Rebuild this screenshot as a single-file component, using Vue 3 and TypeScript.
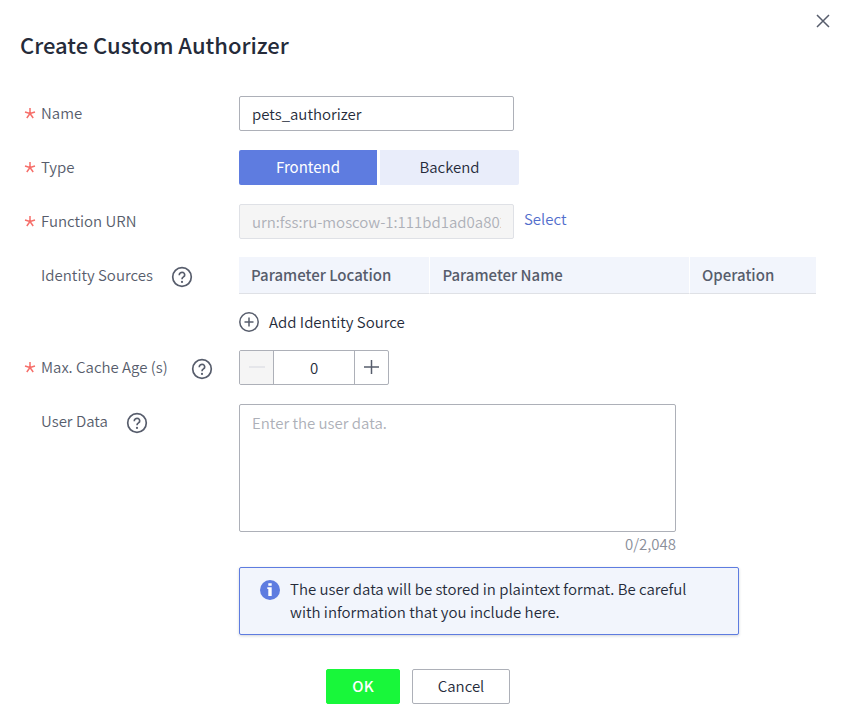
<script setup lang="ts">
import { computed, ref } from 'vue'

type AuthorizerType = 'Frontend' | 'Backend'

const types: AuthorizerType[] = ['Frontend', 'Backend']
const columns: string[] = ['Parameter Location', 'Parameter Name', 'Operation']
const maxLength = 2048

const name = ref('pets_authorizer')
const selectedType = ref<AuthorizerType>('Frontend')
const functionUrn = ref('urn:fss:ru-moscow-1:111bd1ad0a80259')
const cacheAge = ref(0)
const userData = ref('')

const counter = computed(() => `${userData.value.length}/${maxLength.toLocaleString('en-US')}`)

function step(delta: number): void {
  cacheAge.value = Math.max(0, Number(cacheAge.value) + delta)
}
</script>

<template>
  <main class="dialog" role="dialog" aria-labelledby="dialog-title">
    <header class="header">
      <h1 id="dialog-title" class="title">Create Custom Authorizer</h1>
      <button class="close" type="button" aria-label="Close">
        <svg width="14" height="14" viewBox="0 0 14 14"><path d="M1 1l12 12M13 1L1 13" /></svg>
      </button>
    </header>

    <form class="form" @submit.prevent>
      <div class="row">
        <div class="label required">
          <svg class="star" width="12" height="12" viewBox="0 0 12 12"><path d="M6 6.500V1M6 6.500L1 5M6 6.500l5-1.500M6 6.500l-3.200 4.500M6 6.500l3.200 4.500" /></svg>
          <label for="name">Name</label>
        </div>
        <input id="name" v-model="name" class="input" type="text" />
      </div>

      <div class="row">
        <div class="label required">
          <svg class="star" width="12" height="12" viewBox="0 0 12 12"><path d="M6 6.500V1M6 6.500L1 5M6 6.500l5-1.500M6 6.500l-3.200 4.500M6 6.500l3.200 4.500" /></svg>
          <span id="type-label">Type</span>
        </div>
        <div class="segments" role="group" aria-labelledby="type-label">
          <button
            v-for="type in types"
            :key="type"
            type="button"
            class="segment"
            :class="{ active: type === selectedType }"
            :aria-pressed="type === selectedType"
            @click="selectedType = type"
          >{{ type }}</button>
        </div>
      </div>

      <div class="row compact">
        <div class="label required">
          <svg class="star" width="12" height="12" viewBox="0 0 12 12"><path d="M6 6.500V1M6 6.500L1 5M6 6.500l5-1.500M6 6.500l-3.200 4.500M6 6.500l3.200 4.500" /></svg>
          <label for="urn">Function URN</label>
        </div>
        <div class="inline">
          <input id="urn" v-model="functionUrn" class="input" type="text" disabled />
          <a class="link" href="#">Select</a>
        </div>
      </div>

      <div class="row">
        <div class="label table-label">
          <span id="sources-label">Identity Sources</span>
          <svg class="help" width="22" height="22" viewBox="0 0 22 22"><circle cx="11" cy="11" r="9.300" /><path d="M8.300 9.300V8.900A2.700 2.500 0 1 1 12.500 10.900Q11 11.800 11 13.200" /><circle class="dot" cx="11" cy="15.900" r="1.100" /></svg>
        </div>
        <div class="sources">
          <table class="table" aria-labelledby="sources-label">
            <thead>
              <tr><th v-for="column in columns" :key="column" scope="col">{{ column }}</th></tr>
            </thead>
          </table>
          <button class="add" type="button">
            <svg width="20" height="20" viewBox="0 0 20 20"><circle cx="10" cy="10" r="9.200" /><path d="M10 5.500v9M5.500 10h9" /></svg>
            Add Identity Source
          </button>
        </div>
      </div>

      <div class="row">
        <div class="label required">
          <svg class="star" width="12" height="12" viewBox="0 0 12 12"><path d="M6 6.500V1M6 6.500L1 5M6 6.500l5-1.500M6 6.500l-3.200 4.500M6 6.500l3.200 4.500" /></svg>
          <label for="age">Max. Cache Age (s)</label>
          <svg class="help" width="22" height="22" viewBox="0 0 22 22"><circle cx="11" cy="11" r="9.300" /><path d="M8.300 9.300V8.900A2.700 2.500 0 1 1 12.500 10.900Q11 11.800 11 13.200" /><circle class="dot" cx="11" cy="15.900" r="1.100" /></svg>
        </div>
        <div class="stepper">
          <button type="button" aria-label="Decrease" :disabled="cacheAge <= 0" @click="step(-1)">
            <svg width="16" height="16" viewBox="0 0 16 16"><path d="M0 7h16" /></svg>
          </button>
          <input id="age" v-model="cacheAge" type="text" inputmode="numeric" />
          <button type="button" aria-label="Increase" @click="step(1)">
            <svg width="16" height="16" viewBox="0 0 16 16"><path d="M0 7h15M7.500 0v14" /></svg>
          </button>
        </div>
      </div>

      <div class="row">
        <div class="label">
          <label for="user-data">User Data</label>
          <svg class="help" width="22" height="22" viewBox="0 0 22 22"><circle cx="11" cy="11" r="9.300" /><path d="M8.300 9.300V8.900A2.700 2.500 0 1 1 12.500 10.900Q11 11.800 11 13.200" /><circle class="dot" cx="11" cy="15.900" r="1.100" /></svg>
        </div>
        <div class="user-data">
          <textarea id="user-data" v-model="userData" :maxlength="maxLength" placeholder="Enter the user data."></textarea>
          <span class="counter">{{ counter }}</span>
          <div class="notice" role="note">
            <svg width="20" height="20" viewBox="0 0 20 20"><circle cx="10" cy="10" r="10" /><path d="M8.300 3.200h3.400v2.600H8.300zM7.300 7.300h4.400v8.700H8.300V9h-1z" /></svg>
            <p>The user data will be stored in plaintext format. Be careful with information that you include here.</p>
          </div>
        </div>
      </div>

      <footer class="actions">
        <button class="action primary" type="submit">OK</button>
        <button class="action" type="button">Cancel</button>
      </footer>
    </form>
  </main>
</template>

<style>
body {
  margin: 0;
  background: #fff;
}
</style>

<style scoped>
.dialog {
  box-sizing: border-box;
  padding: 11px 26px 20px 20px;
  color: #252b3a;
  font: 350 15px/24px "Noto Sans CJK SC", "Noto Sans", sans-serif;
}

.dialog *,
.dialog *::before {
  box-sizing: border-box;
}

button,
input,
textarea {
  margin: 0;
  font: inherit;
  color: inherit;
}

button {
  padding: 0;
  border: 0;
  background: none;
  cursor: pointer;
}

svg {
  display: block;
  flex: none;
  fill: none;
  stroke: #575d6c;
}

.header {
  display: flex;
  align-items: flex-start;
  justify-content: space-between;
  margin-right: -20px;
}

.title {
  margin: 17px 0 0;
  font-size: 22px;
  line-height: 32px;
  font-weight: 500;
}

.close {
  padding: 3px 6px;
}

.close svg {
  stroke-width: 1.500;
}

.form {
  margin-top: 36px;
}

.row {
  display: grid;
  grid-template-columns: 219px minmax(0, 1fr);
  align-items: start;
  margin-bottom: 19px;
}

.compact {
  margin-bottom: 18px;
}

.label {
  display: flex;
  align-items: center;
  height: 33px;
  padding-left: 21px;
  color: #575d6c;
}

.table-label {
  height: 35px;
}

.required {
  padding-left: 4px;
  gap: 5px;
}

.star {
  stroke: #f66f6a;
  stroke-width: 1.500;
}

.help {
  margin: 4px 0 0 18px;
  stroke-width: 1.700;
}

.dot {
  fill: #575d6c;
  stroke: none;
}

.input {
  width: 275px;
  height: 35px;
  padding: 0 12px;
  border: 1px solid #adb0b8;
  border-radius: 2px;
  background: #fff;
}

.input:disabled {
  border-color: #dfe1e6;
  background: #f5f5f5;
  color: #adb0b8;
}

.segments {
  display: flex;
  gap: 3px;
}

.segment {
  width: 139px;
  height: 35px;
  padding-bottom: 2px;
  border-radius: 0 2px 2px 0;
  background: #e9edfa;
}

.segment:first-child {
  width: 138px;
  border-radius: 2px 0 0 2px;
}

.active {
  background: #5e7ce0;
  color: #fff;
  font-weight: 400;
}

.inline {
  display: flex;
  gap: 10px;
}

.link {
  line-height: 30px;
  color: #526ecc;
  text-decoration: none;
}

.table {
  width: 100%;
  border-collapse: separate;
  border-spacing: 0;
  table-layout: fixed;
}

.table th {
  height: 37px;
  padding: 0 12px;
  border-bottom: 1px solid #dfe1e6;
  background: #f2f5fc;
  color: #575d6c;
  font-weight: 500;
  text-align: left;
}

.table th + th {
  border-left: 1px solid #fff;
}

.table th:first-child {
  width: 33%;
}

.table th:last-child {
  width: 22%;
}

.add {
  display: flex;
  align-items: center;
  gap: 10px;
  height: 24px;
  margin-top: 16px;
  margin-bottom: -3px;
}

.add svg {
  stroke-width: 1.500;
}

.stepper {
  display: flex;
  width: 150px;
  height: 35px;
  border: 1px solid #adb0b8;
  border-radius: 2px;
  overflow: hidden;
}

.stepper button {
  display: grid;
  place-items: center;
  width: 33px;
  flex: none;
}

.stepper button:disabled {
  background: #f5f5f5;
}

.stepper button:disabled svg {
  stroke: #dfe1e6;
}

.stepper svg {
  stroke-width: 1.500;
}

.stepper input {
  flex: 1;
  min-width: 0;
  padding: 0;
  border: solid #adb0b8;
  border-width: 0 1px;
  text-align: center;
}

.user-data {
  display: flex;
  flex-direction: column;
  max-width: 500px;
}

.user-data textarea {
  width: 437px;
  height: 128px;
  padding: 6px 12px;
  border: 1px solid #adb0b8;
  border-radius: 2px;
  resize: none;
}

.user-data textarea::placeholder {
  color: #adb0b8;
}

.counter {
  width: 437px;
  color: #8a8e99;
  text-align: right;
}

.notice {
  display: flex;
  gap: 10px;
  margin-top: 11px;
  padding: 9px 20px 11px;
  border: 1px solid #5e7ce0;
  border-radius: 2px;
  background: #f2f5fc;
  box-shadow: 0 1px 3px rgba(37, 43, 58, 0.2);
  line-height: 23px;
}

.notice p {
  margin: 0;
}

.notice svg {
  margin-top: 3px;
  fill: #5e7ce0;
  stroke: none;
}

.notice path {
  fill: #fff;
}

.actions {
  display: flex;
  justify-content: center;
  gap: 12px;
  margin-top: 34px;
}

.action {
  width: 98px;
  height: 35px;
  padding-bottom: 2px;
  border: 1px solid #adb0b8;
  border-radius: 2px;
}

.primary {
  width: 74px;
  border-color: #18f73a;
  background: #18f73a;
  color: #fff;
  font-weight: 500;
}
</style>
